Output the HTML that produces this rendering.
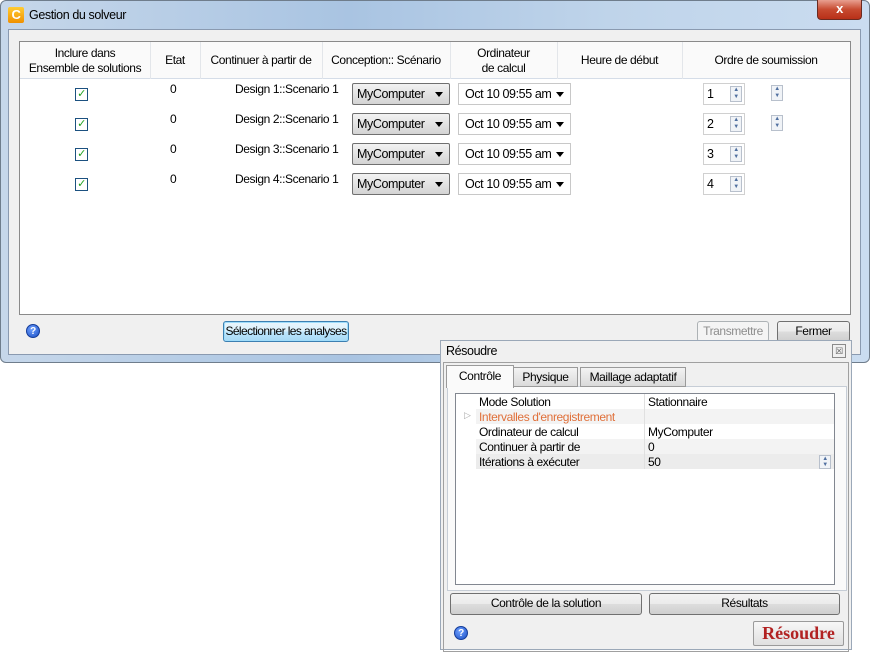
<!DOCTYPE html>
<html><head><meta charset="utf-8"><style>
*{box-sizing:border-box}
body{margin:0;width:870px;height:648px;background:#fff;font-family:"Liberation Sans",sans-serif;font-size:12px;color:#000;position:relative;overflow:hidden;letter-spacing:-0.4px}
.abs{position:absolute;white-space:nowrap}
.frame{left:0;top:0;width:870px;height:363px;border:1px solid #6f7d8c;border-radius:6px;background:linear-gradient(90deg,#c6d7ea,#a9c4e2 40%,#bfd4ea 70%,#cadcf0)}
.inner{left:8px;top:29px;width:853px;height:326px;background:#f0f0f0;border:1px solid #8a9ab0}
.table{left:19px;top:41px;width:832px;height:274px;background:#fff;border:1px solid #8a8a8a}
.hdr{left:20px;top:42px;width:830px;height:37px;background:#fafafa;border-bottom:1px solid #d5dde8}
.hs{top:42px;width:1px;height:37px;background:#e3e6ea}
.ht{text-align:center;line-height:15px}
.cb{width:13px;height:13px;border:1px solid #1c5180;background:#fff;color:#21a121;font-size:11px;line-height:11px;text-align:center}
.dd{width:98px;height:22px;border:1px solid #707070;border-radius:2px;background:linear-gradient(#f2f2f2,#d4d4d4);padding:3px 4px;font-size:12.5px}
.dd2{width:113px;height:22px;border:1px solid #c8c8c8;background:#fff;padding:3px 6px;font-size:12.5px}
.arr{position:absolute;right:6px;top:8px;width:0;height:0;border-left:4px solid transparent;border-right:4px solid transparent;border-top:5px solid #000}
.sp{width:42px;height:22px;border:1px solid #d0d0d0;background:#fff;padding:3px 3px;font-size:12.5px}
.spb{position:absolute;right:2px;top:2px;width:12px;height:16px;border:1px solid #b8c0cc;background:#f0f3f7;font-size:6px;color:#5070a0;line-height:7px;text-align:center}
.btn{border:1px solid #707070;border-radius:3px;background:linear-gradient(#f2f2f2,#ebebeb 50%,#dddddd 50%,#cfcfcf);text-align:center;line-height:19px}
.help{width:14px;height:14px;border-radius:50%;background:radial-gradient(circle at 40% 35%,#6fa0ff,#1a4fc4);color:#fff;font-size:10px;font-weight:bold;line-height:14px;text-align:center;border:1px solid #143c99}
</style></head><body>
<div class="abs frame"></div>
<div class="abs" style="left:8px;top:7px;width:16px;height:16px;background:linear-gradient(#ffcc33,#f09000);border-radius:2px;color:#fff;font-weight:bold;font-size:13px;line-height:16px;text-align:center">C</div>
<div class="abs" style="left:29px;top:8px;font-size:12.5px">Gestion du solveur</div>
<div class="abs" style="left:817px;top:0;width:45px;height:20px;background:linear-gradient(#e8a090,#c74a30 50%,#b83018);border:1px solid #6b2a20;border-top:none;border-radius:0 0 4px 4px;color:#fff;font-weight:bold;text-align:center;line-height:18px;font-size:13px">x</div>
<div class="abs inner"></div>
<div class="abs table"></div>
<div class="abs hdr"></div>
<div class="abs hs" style="left:150px"></div><div class="abs hs" style="left:200px"></div><div class="abs hs" style="left:322px"></div><div class="abs hs" style="left:450px"></div><div class="abs hs" style="left:557px"></div><div class="abs hs" style="left:682px"></div>
<div class="abs ht" style="left:20px;top:46px;width:130px">Inclure dans<br>Ensemble de solutions</div>
<div class="abs ht" style="left:150px;top:53px;width:50px">Etat</div>
<div class="abs ht" style="left:200px;top:53px;width:122px">Continuer à partir de</div>
<div class="abs ht" style="left:322px;top:53px;width:128px">Conception:: Scénario</div>
<div class="abs ht" style="left:450px;top:46px;width:107px">Ordinateur<br>de calcul</div>
<div class="abs ht" style="left:557px;top:53px;width:125px">Heure de début</div>
<div class="abs ht" style="left:682px;top:53px;width:168px">Ordre de soumission</div>

<div class="abs cb" style="left:75px;top:88px">✓</div><div class="abs" style="left:170px;top:82px">0</div><div class="abs" style="left:235px;top:82px">Design 1::Scenario 1</div>
<div class="abs dd" style="left:352px;top:83px">MyComputer<span class="arr"></span></div><div class="abs dd2" style="left:458px;top:83px">Oct 10 09:55 am<span class="arr"></span></div>
<div class="abs sp" style="left:703px;top:83px">1<span class="spb">▲<br>▼</span></div><div class="abs spb" style="left:771px;top:85px;right:auto">▲<br>▼</div>

<div class="abs cb" style="left:75px;top:118px">✓</div><div class="abs" style="left:170px;top:112px">0</div><div class="abs" style="left:235px;top:112px">Design 2::Scenario 1</div>
<div class="abs dd" style="left:352px;top:113px">MyComputer<span class="arr"></span></div><div class="abs dd2" style="left:458px;top:113px">Oct 10 09:55 am<span class="arr"></span></div>
<div class="abs sp" style="left:703px;top:113px">2<span class="spb">▲<br>▼</span></div><div class="abs spb" style="left:771px;top:115px;right:auto">▲<br>▼</div>

<div class="abs cb" style="left:75px;top:148px">✓</div><div class="abs" style="left:170px;top:142px">0</div><div class="abs" style="left:235px;top:142px">Design 3::Scenario 1</div>
<div class="abs dd" style="left:352px;top:143px">MyComputer<span class="arr"></span></div><div class="abs dd2" style="left:458px;top:143px">Oct 10 09:55 am<span class="arr"></span></div>
<div class="abs sp" style="left:703px;top:143px">3<span class="spb">▲<br>▼</span></div>

<div class="abs cb" style="left:75px;top:178px">✓</div><div class="abs" style="left:170px;top:172px">0</div><div class="abs" style="left:235px;top:172px">Design 4::Scenario 1</div>
<div class="abs dd" style="left:352px;top:173px">MyComputer<span class="arr"></span></div><div class="abs dd2" style="left:458px;top:173px">Oct 10 09:55 am<span class="arr"></span></div>
<div class="abs sp" style="left:703px;top:173px">4<span class="spb">▲<br>▼</span></div>

<div class="abs help" style="left:26px;top:324px">?</div>
<div class="abs btn" style="left:223px;top:321px;width:126px;height:21px;border-color:#3c7fb1;background:linear-gradient(#eaf6fd,#d9f0fc 50%,#bee6fd 50%,#a7d9f5);box-shadow:0 0 0 1px #9fdcfa inset;letter-spacing:-0.6px">Sélectionner les analyses</div>
<div class="abs btn" style="left:697px;top:321px;width:72px;height:21px;color:#8d8d8d;border-color:#adb2b5;background:#f4f4f4">Transmettre</div>
<div class="abs btn" style="left:777px;top:321px;width:73px;height:21px">Fermer</div>

<div class="abs" style="left:440px;top:340px;width:412px;height:310px;background:#f0f0f0;border:1px solid #9ba8b8"></div>
<div class="abs" style="left:446px;top:344px;font-size:12.5px">Résoudre</div>
<div class="abs" style="left:832px;top:344px;width:14px;height:14px;border:1px solid #8a8a8a;font-size:9px;line-height:12px;text-align:center;color:#555">☒</div>
<div class="abs" style="left:443px;top:362px;width:406px;height:290px;border:1px solid #a0a0a0"></div>
<div class="abs" style="left:447px;top:386px;width:400px;height:205px;border:1px solid #c6cdd6;background:#fafafa"></div>
<div class="abs" style="left:513px;top:367px;width:65px;height:20px;border:1px solid #9a9a9a;background:linear-gradient(#f3f3f3,#dadada);text-align:center;line-height:18px">Physique</div>
<div class="abs" style="left:580px;top:367px;width:106px;height:20px;border:1px solid #9a9a9a;background:linear-gradient(#f3f3f3,#dadada);text-align:center;line-height:18px">Maillage adaptatif</div>
<div class="abs" style="left:446px;top:365px;width:68px;height:23px;border:1px solid #9a9a9a;border-bottom:none;background:#fafafa;text-align:center;line-height:21px">Contrôle</div>
<div class="abs" style="left:455px;top:393px;width:380px;height:192px;border:1px solid #828790;background:#fff"></div>
<div class="abs" style="left:476px;top:409px;width:358px;height:15px;background:#f3f3f3"></div>
<div class="abs" style="left:476px;top:439px;width:358px;height:15px;background:#f3f3f3"></div>
<div class="abs" style="left:476px;top:454px;width:358px;height:15px;background:#ececec"></div>
<div class="abs" style="left:644px;top:394px;width:1px;height:75px;background:#e0e0e0"></div>
<div class="abs" style="left:479px;top:395px;line-height:15px">Mode Solution<br><span style="color:#e0703a">Intervalles d'enregistrement</span><br>Ordinateur de calcul<br>Continuer à partir de<br>Itérations à exécuter</div>
<div class="abs" style="left:464px;top:410px;color:#aaa;font-size:9px">▷</div>
<div class="abs" style="left:648px;top:395px;line-height:15px">Stationnaire<br>&nbsp;<br>MyComputer<br>0<br>50</div>
<div class="abs spb" style="left:819px;top:455px;right:auto;height:14px;line-height:6px">▲<br>▼</div>
<div class="abs btn" style="left:450px;top:593px;width:192px;height:22px">Contrôle de la solution</div>
<div class="abs btn" style="left:649px;top:593px;width:191px;height:22px">Résultats</div>
<div class="abs help" style="left:454px;top:626px">?</div>
<div class="abs" style="left:753px;top:621px;width:91px;height:25px;border:1px solid #9a9a9a;border-radius:2px;background:linear-gradient(#f7f7f7,#e0e0e0);color:#b22222;font-family:'Liberation Serif',serif;font-weight:bold;font-size:18px;text-align:center;line-height:23px;letter-spacing:0">Résoudre</div>
</body></html>
